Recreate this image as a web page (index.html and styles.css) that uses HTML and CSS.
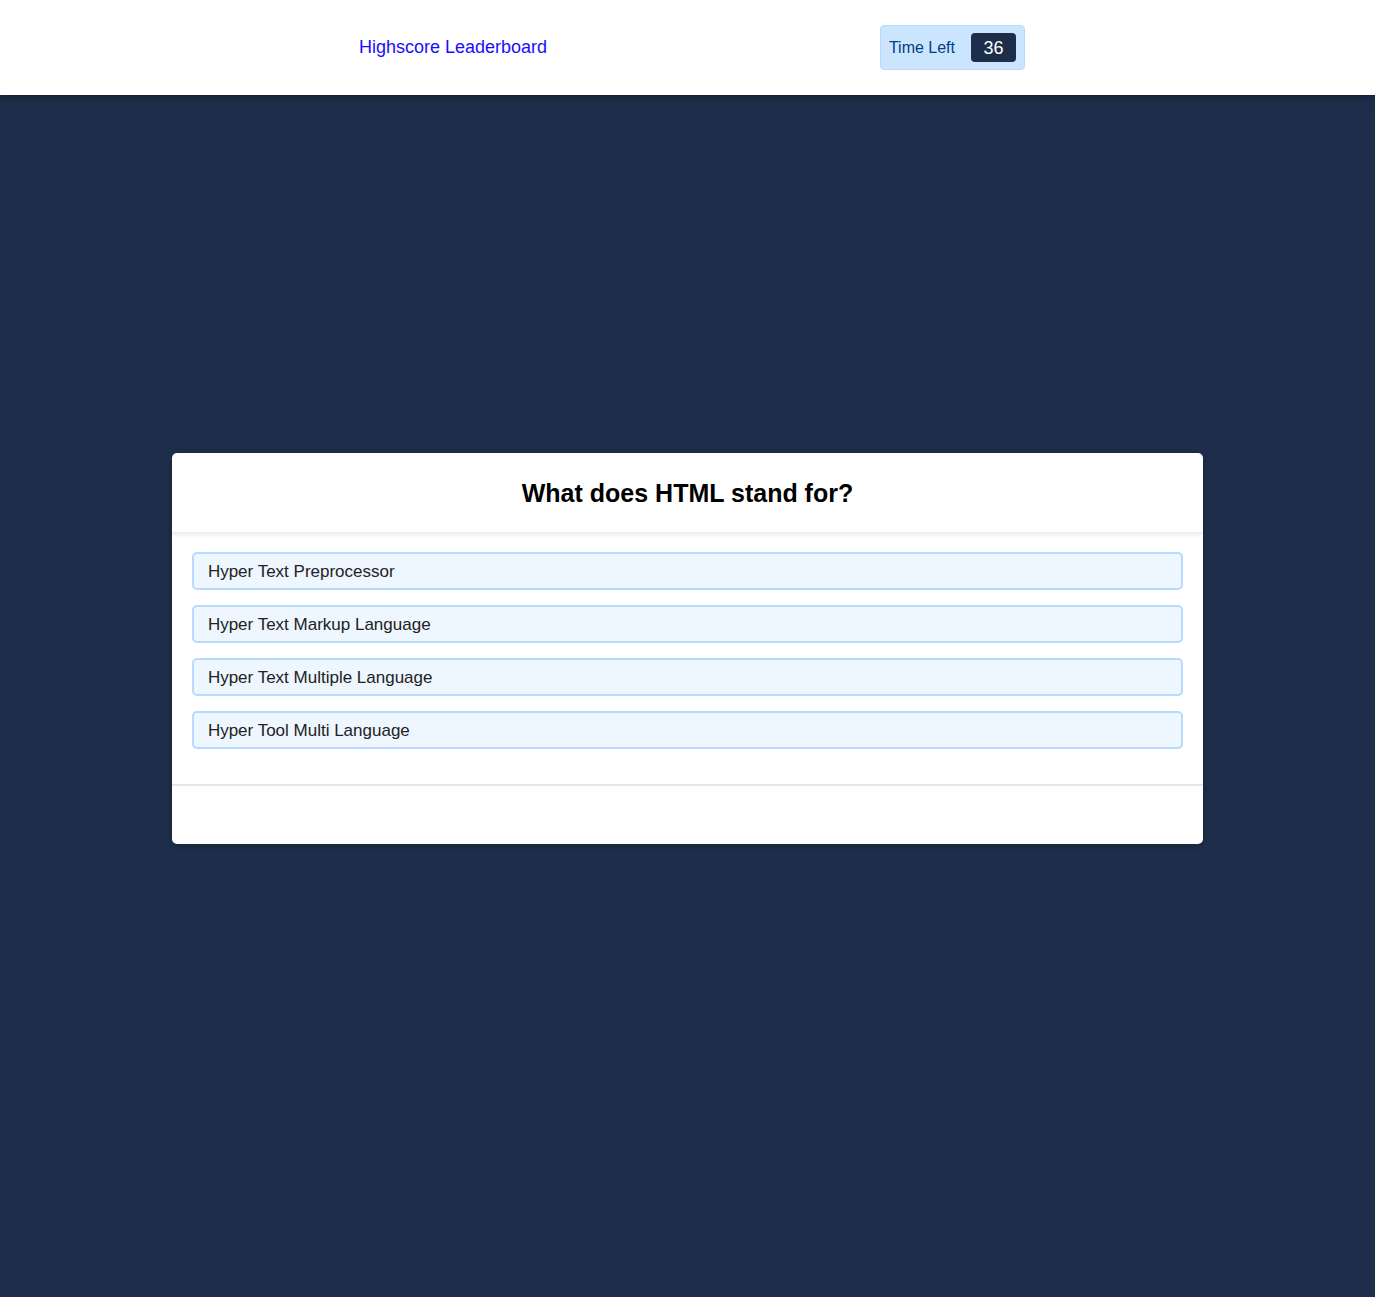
FILE: index.html
```html
<!DOCTYPE html>
<html>
<head>
<meta charset="utf-8">
<link rel="stylesheet" href="styles.css">
</head>
<body>
<header class="topbar">
  <a class="leader-link" href="#">Highscore Leaderboard</a>
  <div class="timer">
    <span class="timer-label">Time Left</span>
    <span class="timer-badge">36</span>
  </div>
</header>
<main class="stage">
  <section class="quiz-card">
    <div class="quiz-head">
      <h2 class="quiz-title">What does HTML stand for?</h2>
    </div>
    <div class="quiz-body">
      <button class="option">Hyper Text Preprocessor</button>
      <button class="option">Hyper Text Markup Language</button>
      <button class="option">Hyper Text Multiple Language</button>
      <button class="option">Hyper Tool Multi Language</button>
    </div>
    <div class="quiz-foot"></div>
  </section>
</main>
</body>
</html>
```
FILE: styles.css
```css
* { box-sizing: border-box; }
html, body { margin: 0; padding: 0; }
body {
  font-family: "Liberation Sans", Arial, sans-serif;
  background: #1e2e4a;
  min-height: 100vh;
}
.topbar {
  position: relative;
  z-index: 2;
  height: 95px;
  background: #fff;
  display: flex;
  align-items: center;
  justify-content: space-between;
  padding: 0 350px 0 359px;
  box-shadow: 0 2px 8px rgba(0,0,0,0.35);
}
.leader-link {
  color: #1a0dff;
  text-decoration: none;
  font-size: 18px;
}
.timer {
  display: flex;
  align-items: center;
  height: 45px;
  padding: 0 8px 0 8px;
  background: #cce5ff;
  border: 1px solid #b8daff;
  border-radius: 4px;
  color: #004085;
  font-size: 16px;
}
.timer-label { margin-right: 16px; }
.timer-badge {
  display: inline-flex;
  align-items: center;
  justify-content: center;
  width: 45px;
  height: 29px;
  padding-top: 2px;
  background: #1c2e4a;
  color: #fff;
  border-radius: 4px;
  font-size: 18px;
}
.stage {
  height: calc(100vh - 95px);
  display: flex;
  align-items: center;
  justify-content: center;
  padding-bottom: 95px;
}
.quiz-card {
  width: 75%;
  background: #fff;
  border-radius: 5px;
  overflow: hidden;
  box-shadow: 0 2px 6px rgba(0,0,0,0.25);
}
.quiz-head {
  height: 80px;
  padding-top: 2px;
  display: flex;
  align-items: center;
  justify-content: center;
  box-shadow: 0 2px 4px rgba(0,0,0,0.08);
  border-bottom: 1px solid #eee;
  position: relative;
}
.quiz-title {
  margin: 0;
  font-size: 25px;
  font-weight: bold;
  color: #000;
}
.quiz-body {
  padding: 19px 20px 20px;
  display: flex;
  flex-direction: column;
  gap: 15px;
  padding-bottom: 35px;
}
.option {
  display: block;
  width: 100%;
  height: 38px;
  text-align: left;
  padding: 2px 14px 0;
  background: #eef6ff;
  border: 2px solid #b8daff;
  border-radius: 5px;
  font-family: "Liberation Sans", Arial, sans-serif;
  font-size: 17px;
  color: #222;
}
.quiz-foot {
  height: 60px;
  border-top: 2px solid #e6e6e6;
}
```
